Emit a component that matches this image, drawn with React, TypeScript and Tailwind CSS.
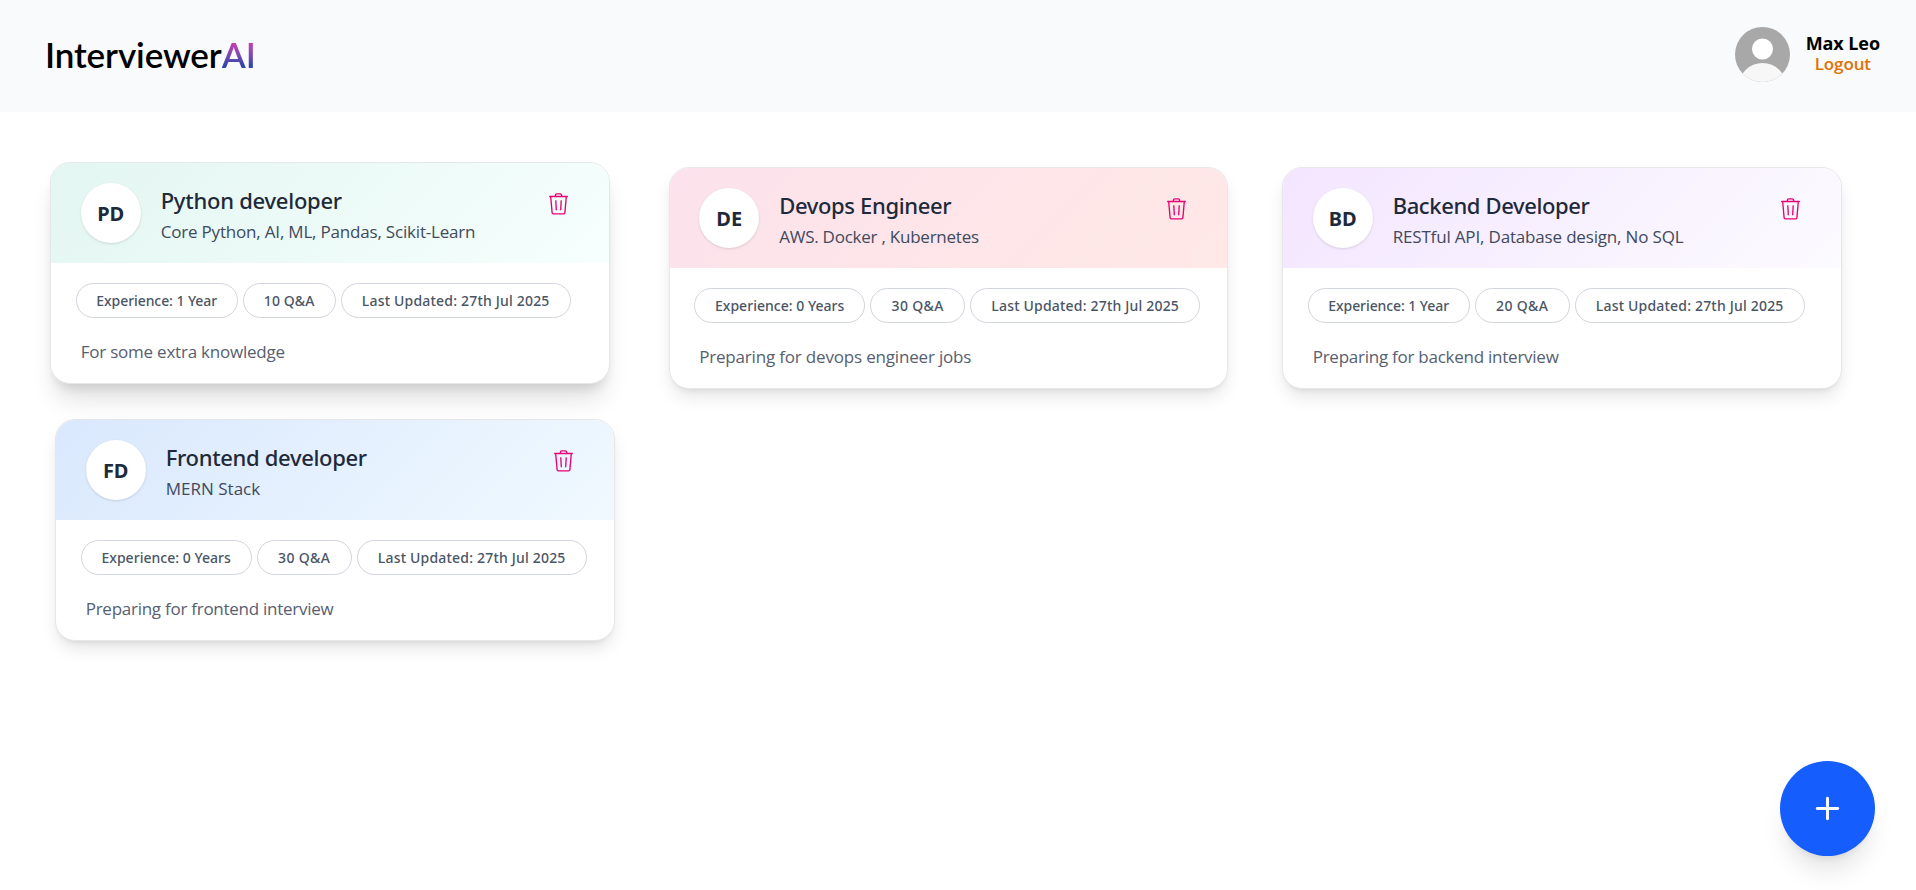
import React from "react";
import clsx from "clsx";
import { LuPlus } from "react-icons/lu";

type Session = {
  initials: string;
  role: string;
  roleTracking: string;
  topics: string;
  topicsTracking: string;
  experience: string;
  experienceClass: string;
  questions: string;
  questionsClass: string;
  updated: string;
  description: string;
  descriptionTracking: string;
  gradient: string;
  raised?: boolean;
};

const sessions: Session[] = [
  {
    initials: "PD",
    role: "Python developer",
    roleTracking: "tracking-[-0.25px]",
    topics: "Core Python, AI, ML, Pandas, Scikit-Learn",
    topicsTracking: "tracking-[-0.19px]",
    experience: "Experience: 1 Year",
    experienceClass: "w-[162px] tracking-[-0.08px]",
    questions: "10 Q&A",
    questionsClass: "w-[93px] tracking-[0.1px]",
    updated: "27th Jul 2025",
    description: "For some extra knowledge",
    descriptionTracking: "tracking-[-0.22px]",
    gradient: "bg-[linear-gradient(135deg,#e3f6f1_0%,#f6fffd_100%)]",
    raised: true,
  },
  {
    initials: "DE",
    role: "Devops Engineer",
    roleTracking: "tracking-[-0.35px]",
    topics: "AWS. Docker , Kubernetes",
    topicsTracking: "tracking-[-0.24px]",
    experience: "Experience: 0 Years",
    experienceClass: "w-[171px] tracking-[0.03px]",
    questions: "30 Q&A",
    questionsClass: "w-[95px] tracking-[0.35px]",
    updated: "27th Jul 2025",
    description: "Preparing for devops engineer jobs",
    descriptionTracking: "tracking-[-0.18px]",
    gradient: "bg-[linear-gradient(135deg,#fce2ec_0%,#ffe8e6_100%)]",
  },
  {
    initials: "BD",
    role: "Backend Developer",
    roleTracking: "tracking-[-0.38px]",
    topics: "RESTful API, Database design, No SQL",
    topicsTracking: "tracking-[-0.17px]",
    experience: "Experience: 1 Year",
    experienceClass: "w-[162px] tracking-[-0.08px]",
    questions: "20 Q&A",
    questionsClass: "w-[95px] tracking-[0.35px]",
    updated: "27th Jul 2025",
    description: "Preparing for backend interview",
    descriptionTracking: "tracking-[-0.25px]",
    gradient: "bg-[linear-gradient(135deg,#f3e5ff_0%,#fcfbff_100%)]",
  },
  {
    initials: "FD",
    role: "Frontend developer",
    roleTracking: "tracking-[-0.32px]",
    topics: "MERN Stack",
    topicsTracking: "tracking-[0.02px]",
    experience: "Experience: 0 Years",
    experienceClass: "w-[171px] tracking-[0.03px]",
    questions: "30 Q&A",
    questionsClass: "w-[95px] tracking-[0.35px]",
    updated: "27th Jul 2025",
    description: "Preparing for frontend interview",
    descriptionTracking: "tracking-[-0.26px]",
    gradient: "bg-[linear-gradient(135deg,#d9e8fd_0%,#f0f9ff_100%)]",
  },
];

function TrashIcon() {
  return (
    <svg
      viewBox="0 0 19 22"
      className="h-[22px] w-[19px]"
      fill="none"
      stroke="currentColor"
      strokeWidth="1.35"
      strokeLinecap="round"
      strokeLinejoin="round"
    >
      <path d="M0.7 3.5h17.6" />
      <path d="M6.4 3.4V2.2a1.4 1.4 0 0 1 1.4-1.4h3.4a1.4 1.4 0 0 1 1.4 1.4v1.2" />
      <path d="M1.7 3.8l1.4 15.8a1.3 1.3 0 0 0 1.3 1.3h10.2a1.3 1.3 0 0 0 1.3-1.3L17.3 3.8" />
      <path d="M6.8 7.8l.5 8.9M12.2 7.8l-.5 8.9" />
    </svg>
  );
}

function Pill({ className, children }: { className: string; children: React.ReactNode }) {
  return (
    <span
      className={clsx(
        "flex h-[34.67px] shrink-0 items-center justify-center rounded-full border border-[#d1d5dc] font-['Noto_Sans',sans-serif] text-[14px] font-medium whitespace-nowrap text-[#4a5565]",
        className,
      )}
    >
      {children}
    </span>
  );
}

function SessionCard({ s }: { s: Session }) {
  return (
    <article
      className={clsx(
        "h-[221.5px] overflow-hidden rounded-[20px] border border-[#e5e7eb] bg-white",
        s.raised
          ? "-translate-x-[5px] -translate-y-[5px] shadow-[0_20px_25px_-5px_rgb(0_0_0/0.12),0_8px_12px_-5px_rgb(0_0_0/0.12)]"
          : "shadow-[0_10px_18px_-3px_rgb(0_0_0/0.11),0_4px_6px_-4px_rgb(0_0_0/0.11)]",
      )}
    >
      <header className={clsx("flex h-[100px] items-start pt-5 pl-[29.3px] pr-[41px]", s.gradient)}>
        <div className="flex size-[60px] shrink-0 items-center justify-center rounded-full bg-white pt-px font-['Noto_Sans',sans-serif] text-[20px] font-bold text-[#1e2939] shadow-sm">
          {s.initials}
        </div>
        <div className="ml-5 flex-1 pt-[2px]">
          <h2
            className={clsx(
              "font-['Noto_Sans',sans-serif] text-[22px] leading-[30px] font-medium whitespace-nowrap text-[#1e2939]",
              s.roleTracking,
            )}
          >
            {s.role}
          </h2>
          <p className={clsx("mt-[2px] text-[17px] leading-[29px] whitespace-nowrap text-[#3f4a5c]", s.topicsTracking)}>
            {s.topics}
          </p>
        </div>
        <button type="button" aria-label="Delete" className="mt-[10px] text-[#e60076]">
          <TrashIcon />
        </button>
      </header>
      <div className="pt-5 pl-[24.3px]">
        <div className="flex gap-[5px]">
          <Pill className={s.experienceClass}>{s.experience}</Pill>
          <Pill className={s.questionsClass}>{s.questions}</Pill>
          <Pill className="w-[230px] tracking-[0.19px]">Last Updated: {s.updated}</Pill>
        </div>
        <p
          className={clsx(
            "mt-[20px] pl-[5px] text-[17px] leading-[28px] whitespace-nowrap text-[#566070]",
            s.descriptionTracking,
          )}
        >
          {s.description}
        </p>
      </div>
    </article>
  );
}

function Avatar() {
  return (
    <svg viewBox="0 0 55 55" className="size-[55px]">
      <defs>
        <clipPath id="avatar-clip">
          <circle cx="27.5" cy="27.5" r="27.5" />
        </clipPath>
      </defs>
      <g clipPath="url(#avatar-clip)">
        <rect width="55" height="55" fill="#a8a8a8" />
        <circle cx="27.5" cy="22" r="10.5" fill="#fff" />
        <circle cx="27.5" cy="60" r="24" fill="#f7f7f7" />
      </g>
    </svg>
  );
}

export default function App() {
  return (
    <div className="flex min-h-[890px] flex-col bg-white font-['Open_Sans','Noto_Sans',sans-serif]">
      <nav className="flex h-[112px] items-start justify-between bg-[#f9fafc] pr-[36px] pl-[45px]">
        <div className="mt-[32px] flex font-['Lato',sans-serif] text-[35px] leading-[44px] font-semibold">
          <span className="tracking-[-0.1px] text-black">Interviewer</span>
          <span className="bg-linear-to-b from-[#d633b0] from-20% to-[#3045ad] to-75% bg-clip-text text-transparent">
            AI
          </span>
        </div>
        <div className="mt-[27px] flex">
          <Avatar />
          <div className="ml-[16px] flex flex-col items-center pt-[6px]">
            <span className="text-[18px] leading-[20px] font-bold tracking-[-0.08px] text-black">Max Leo</span>
            <span className="pt-px text-[17px] leading-[20px] font-semibold tracking-[-0.1px] text-[#e17100]">
              Logout
            </span>
          </div>
        </div>
      </nav>

      <main className="grid grid-cols-[559.3px_559.3px_559.3px] gap-x-[54.2px] gap-y-[30.2px] pt-[55.4px] pl-[55.4px]">
        {sessions.map((s) => (
          <SessionCard key={s.initials} s={s} />
        ))}
      </main>

      <button
        type="button"
        aria-label="Add new"
        className="fixed right-[41px] bottom-[34px] flex size-[95px] items-center justify-center rounded-full bg-[#155dfc] text-[35px] text-white shadow-xl"
      >
        <LuPlus />
      </button>
    </div>
  );
}
